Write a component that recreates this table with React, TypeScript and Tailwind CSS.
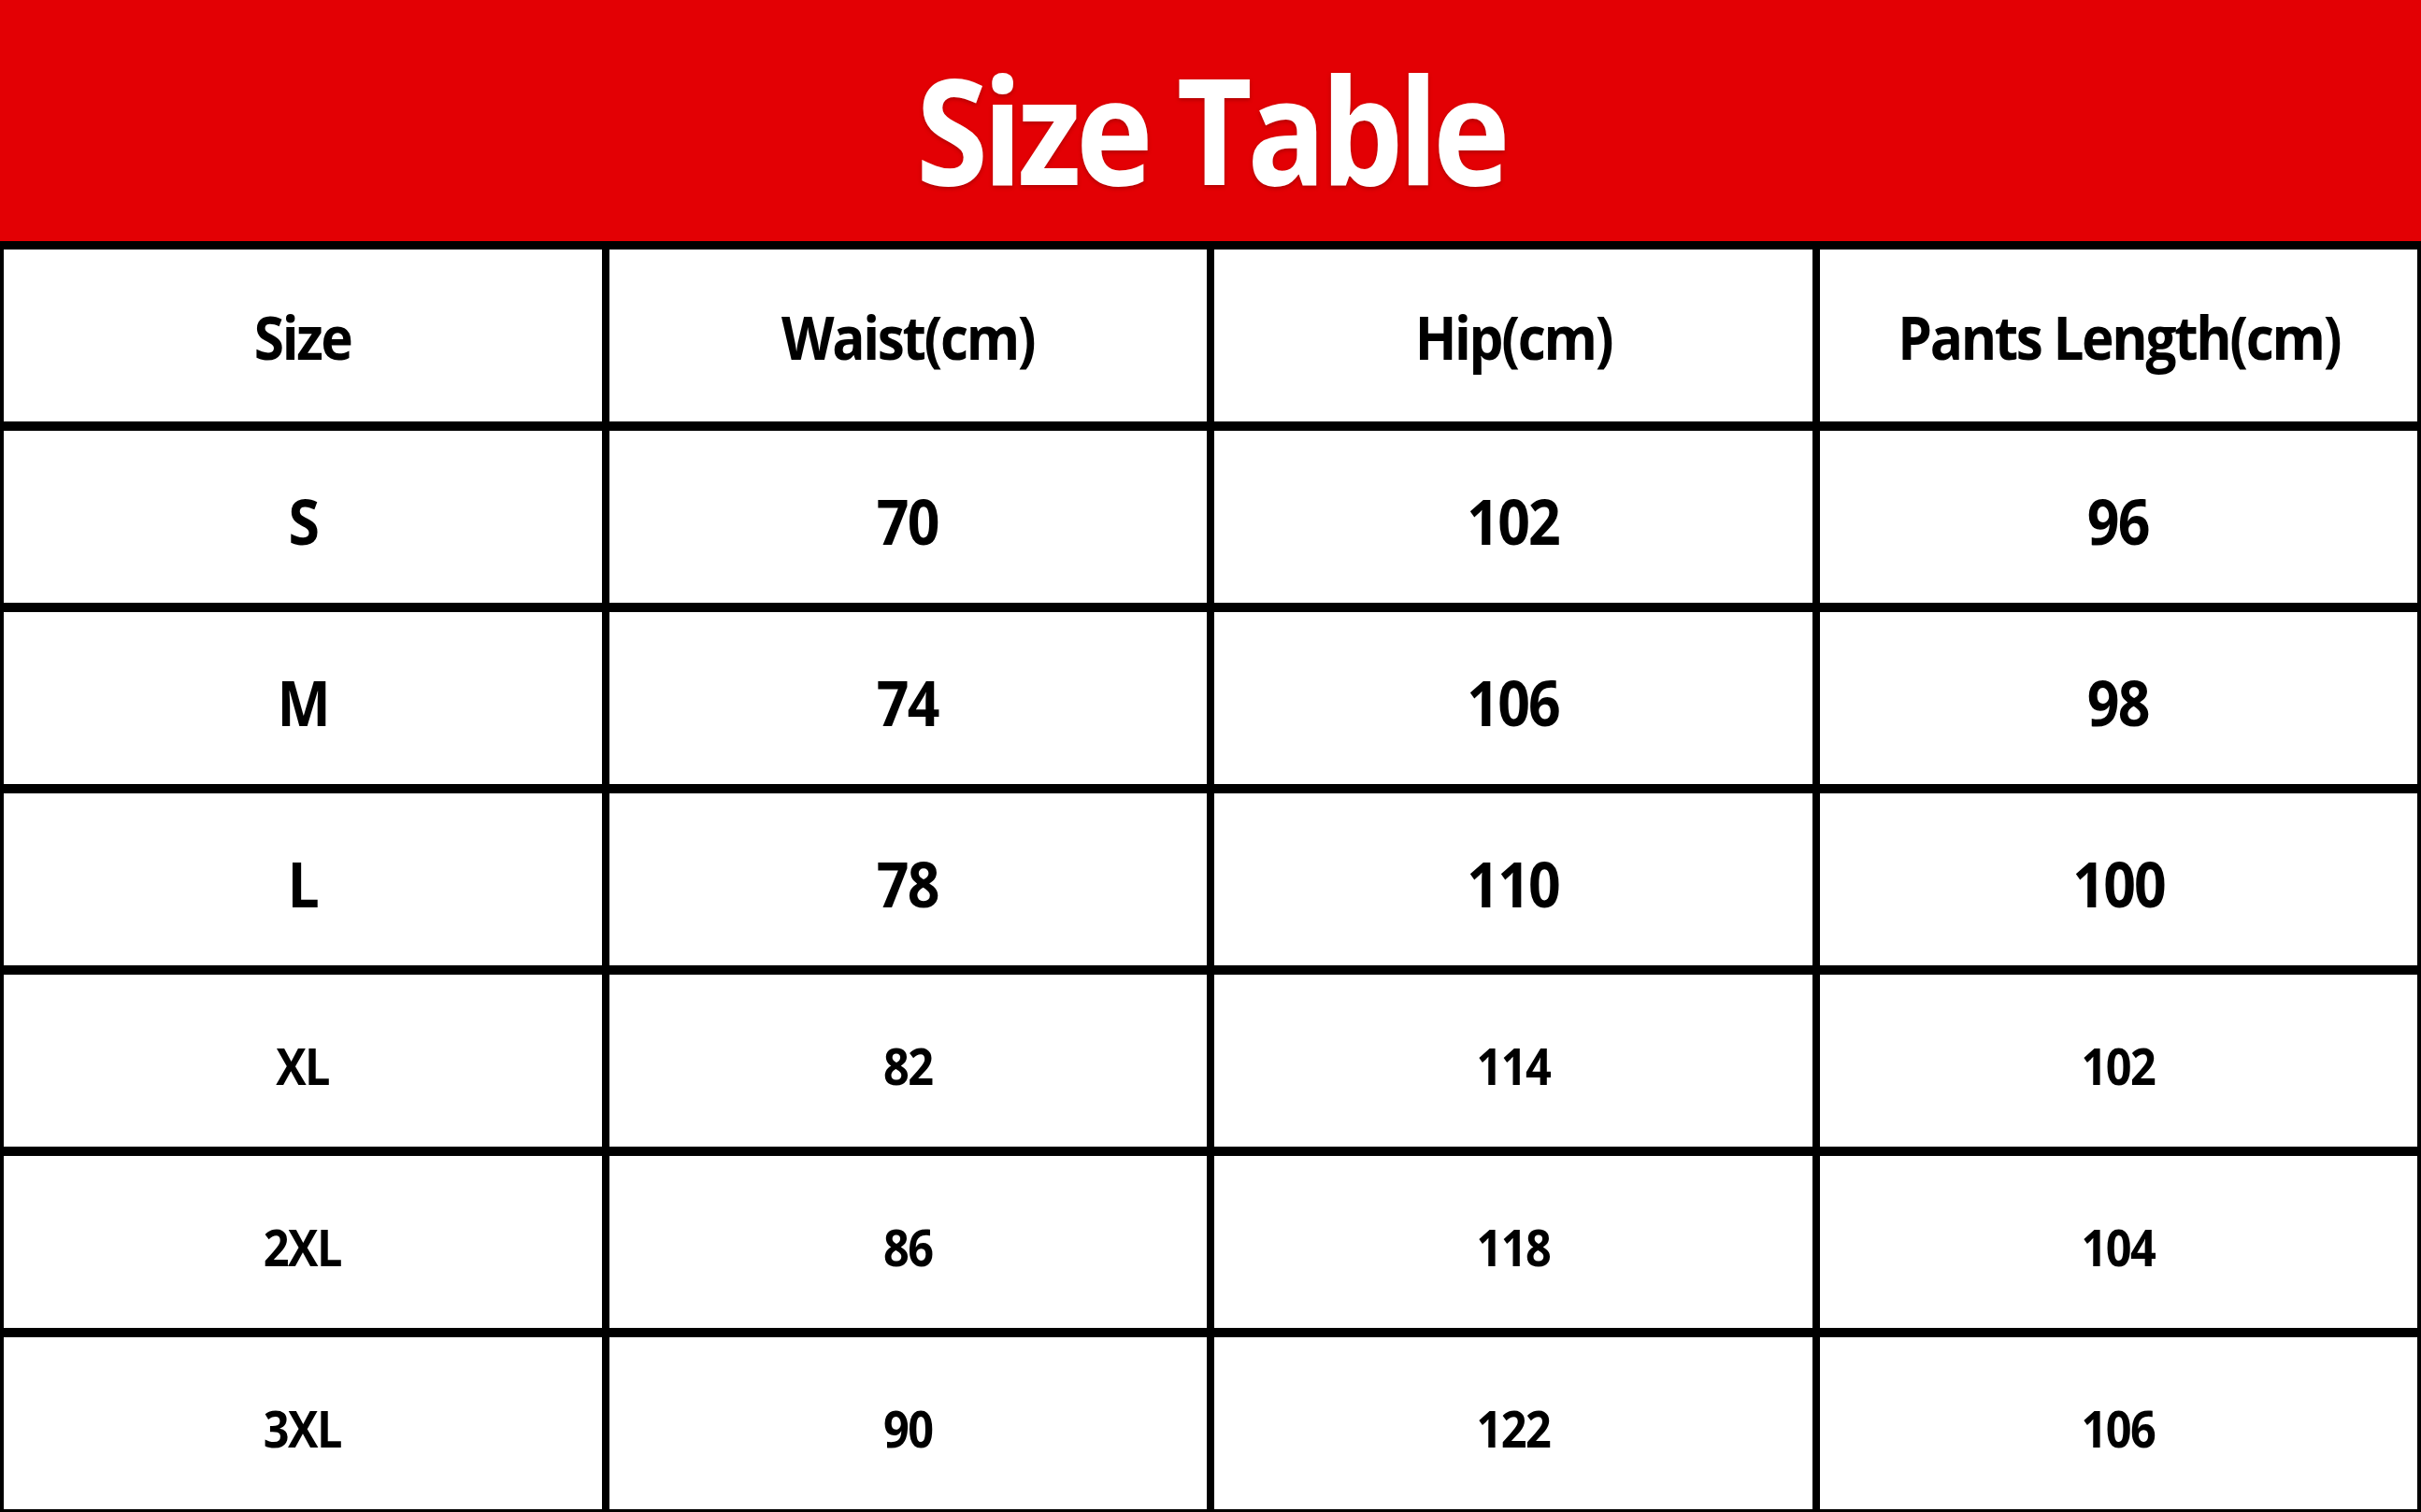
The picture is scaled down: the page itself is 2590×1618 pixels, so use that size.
const headers = ['Size', 'Waist(cm)', 'Hip(cm)', 'Pants Length(cm)'];

const rows = [
  ['S', '70', '102', '96'],
  ['M', '74', '106', '98'],
  ['L', '78', '110', '100'],
  ['XL', '82', '114', '102'],
  ['2XL', '86', '118', '104'],
  ['3XL', '90', '122', '106'],
];

export default function App() {
  return (
    <div className="w-[2590px] h-[1618px] overflow-hidden bg-black font-['Open_Sans','Liberation_Sans',sans-serif] text-black">
      <header className="h-[258px] bg-[#e30004] flex items-center justify-center shadow-[0_4px_6px_rgba(0,0,0,0.35)]">
        <h1 className="text-[158px] font-bold leading-none tracking-[-0.04em] scale-x-[0.885] text-white pt-[16px] [text-shadow:0_2px_5px_rgba(110,0,0,0.45)]">
          Size Table
        </h1>
      </header>

      <div className="grid grid-cols-4 gap-x-[8px] gap-y-[10px] px-[4px] pt-[9px] pb-[3px] bg-black">
        {headers.map((h) => (
          <div key={h} className="h-[184px] bg-white flex items-center justify-center">
            <span className="text-[65px] font-bold leading-none tracking-[-0.04em] scale-x-[0.9] pt-[2px]">{h}</span>
          </div>
        ))}
        {rows.map((row, i) =>
          row.map((cell, j) => (
            <div key={`${i}-${j}`} className="h-[184px] bg-white flex items-center justify-center">
              {i < 3 ? (
                <span className="text-[66px] font-bold leading-none tracking-[-0.03em] scale-x-[0.92] pt-[8px]">{cell}</span>
              ) : (
                <span className="text-[54px] font-bold leading-none tracking-[-0.03em] scale-x-[0.9] pt-[10px]">{cell}</span>
              )}
            </div>
          ))
        )}
      </div>
    </div>
  );
}
